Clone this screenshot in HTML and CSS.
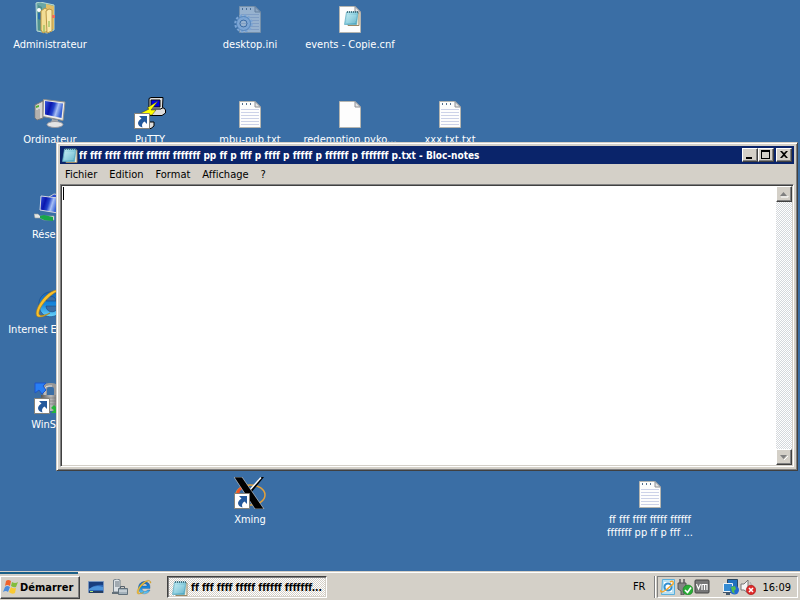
FILE: index.html
```html
<!DOCTYPE html>
<html lang="fr">
<head>
<meta charset="utf-8">
<title>Bureau</title>
<link rel="stylesheet" href="styles.css">
</head>
<body>
<svg class="defs" aria-hidden="true">
  <defs>
    <linearGradient id="screen" x1="0" y1="0" x2="1" y2=".3"><stop offset="0" stop-color="#3858dc"/><stop offset=".35" stop-color="#0a16ae"/><stop offset=".55" stop-color="#2344cc"/><stop offset=".75" stop-color="#a9c0f5"/><stop offset="1" stop-color="#3560d4"/></linearGradient>
    <linearGradient id="pad" x1="0" y1="0" x2="1" y2="1"><stop offset="0" stop-color="#c8eef4"/><stop offset=".5" stop-color="#86cbdc"/><stop offset="1" stop-color="#3d9db9"/></linearGradient>
    <linearGradient id="metal" x1="0" y1="0" x2="1" y2="0"><stop offset="0" stop-color="#555"/><stop offset=".5" stop-color="#bbb"/><stop offset="1" stop-color="#444"/></linearGradient>
    <linearGradient id="ieblue" x1="0" y1="0" x2="0" y2="1"><stop offset="0" stop-color="#1c63b4"/><stop offset=".5" stop-color="#1586dc"/><stop offset="1" stop-color="#6bd4fb"/></linearGradient>
  </defs>
  <symbol id="sheet" viewBox="0 0 32 32">
    <path d="M5.500 4.500H21L26.500 10V30.500H5.500Z" fill="#fdfdfd" stroke="#b5b5b0"/>
    <path d="M21 4.500V10H26.500Z" fill="#e4e4e4" stroke="#8e9096"/>
  </symbol>
  <symbol id="text" viewBox="0 0 32 32">
    <use href="#sheet"/>
    <path d="M7 12.500H25M7 15.500H25M7 18.500H25M7 21.500H25M7 24.500H25M7 27.500H25" stroke="#ccd2e8"/>
    <path d="M8 6h1v2H8zM12 6h1v2h-1zM16 6h1v2h-1z" fill="#536f8c"/>
  </symbol>
  <symbol id="notepad" viewBox="0 0 16 16">
    <path d="M4 3H15V15.500H4Z" fill="#f8f1df" stroke="#9b8865"/>
    <path d="M2.500 2H14L12.500 14.500H.5Z" fill="url(#pad)" stroke="#5ba9c0" stroke-width=".7"/>
    <path d="M3 6H12.500M2.700 8H12.300M2.500 10H12M2.200 12H11.500" stroke="#ddf6fa" stroke-width=".5"/>
    <path d="M3.500 1V3M5.500 1V3M7.500 1V3M9.500 1V3M11.500 1V3M13.500 1V3" stroke="#385f6c" stroke-width=".8"/>
  </symbol>
  <symbol id="shortcut" viewBox="0 0 16 16">
    <path d="M.5.500H15.500V15.500H.5Z" fill="#fff" stroke="#85827a"/>
    <path d="M5 3H13V11L10.500 8.500C8 10 7.500 12 8.500 14.500C3 13 2.500 8.500 7.500 5.500Z" fill="#24599c"/>
  </symbol>
  <symbol id="ie" viewBox="0 0 32 32">
    <path d="M28 19H12C12 25 20 27 23 22H28C25 31 10 33 6 23C2 12 10 4 18 5C25 6 29 11 28 19ZM12 14H22C22 8 13 8 12 14Z" fill="url(#ieblue)" stroke="#174781" stroke-width=".6"/>
    <path d="M30 8C30 0 18 1 9 12C1 22 0 31 6 30C9 30 13 28 16 26C9 29 4 30 5 25C6 20 12 12 19 7C24 3 29 2 28 8Z" fill="#f9c12c" stroke="#a87913" stroke-width=".6"/>
  </symbol>
  <symbol id="monitor" viewBox="0 0 32 32">
    <path d="M1 8L9 4V21L3 23L1 21Z" fill="#d7d5d2" stroke="#777"/>
    <path d="M2 9L5 8V10L2 11Z" fill="#56b431"/>
    <path d="M3 13V22M5 12V22" stroke="#918e8a"/>
    <path d="M18 22L24 23L23 27L17 26Z" fill="#a5a7aa"/>
    <ellipse cx="21" cy="27.500" rx="8" ry="3" fill="#e4e4e5" stroke="#9798a0"/>
    <path d="M9.500 2.500L31 5L29 23.500L9 19.500Z" fill="#eeede9" stroke="#92918d"/>
    <path d="M11 4L29 6.500L27.500 21L11 17.500Z" fill="url(#screen)"/>
  </symbol>
</svg>

<main class="desktop">
  <ul class="icons">
    <li class="item c1 r1"><svg viewBox="0 0 32 32"><path d="M2 1L6 0L20 3V28L13 31L3 29Z" fill="#6ba7a5" stroke="#b9dad2"/><path d="M4 3L8 5V29L4 28Z" fill="#4f918e"/><circle cx="5" cy="8" r="2" fill="#fff"/><path d="M4 11L7 11V18L4 17Z" fill="#286dae"/><path d="M12 2L20 4V27L12 29Z" fill="#e2bf67"/><path d="M7 9L11 6L14 8V29L9 31L7 28Z" fill="#f2dc93" stroke="#b99442"/><path d="M12 9L15 7L18 8V29L13 31Z" fill="#fae9ab" stroke="#bb9748"/><path d="M10 23V30M15 19V25" stroke="#7bb64d"/><path d="M18 13H21V16H18Z" fill="#ef705b"/></svg><span>Administrateur</span></li>
    <li class="item c3 r1"><svg viewBox="0 0 32 32"><g opacity=".48"><use href="#text"/></g><g fill="none" stroke="#7ba5d5"><circle cx="9.500" cy="21.500" r="8" stroke-width="2.500" stroke-dasharray="2.500 1.690"/><circle cx="9.500" cy="21.500" r="5.500" stroke-width="3"/><circle cx="9.500" cy="21.500" r="3.500" stroke="#386ba6"/><circle cx="9.500" cy="21.500" r="7" stroke="#4477b1" stroke-width=".7"/></g></svg><span>desktop.ini</span></li>
    <li class="item c4 r1"><svg viewBox="0 0 32 32"><use href="#sheet"/><use href="#notepad" x="10" y="8" width="16" height="16"/></svg><span>events - Copie.cnf</span></li>
    <li class="item c1 r2"><svg viewBox="0 0 32 32"><use href="#monitor"/></svg><span>Ordinateur</span></li>
    <li class="item c2 r2"><svg viewBox="0 0 32 32"><path d="M17 11H30L31.500 13V16L28 18.500H15V15Z" fill="#ddd" stroke="#000"/><path d="M15 1.500L17 .5H29L28.500 10.500L27 12H15Z" fill="#ddd" stroke="#000"/><path d="M17 3H26V10H17Z" fill="#0000e8" stroke="#111"/><path d="M14 25H20V29L17 31.500H13Z" fill="#ddd" stroke="#000"/><path d="M24 4L13 11L15 12L3 18H18L22 13L17 13Z" fill="#ffff00" stroke="#333" stroke-width=".5"/><use href="#shortcut" x="0" y="16" width="16" height="16"/></svg><span>PuTTY</span></li>
    <li class="item c3 r2"><svg viewBox="0 0 32 32"><use href="#text"/></svg><span>mbu-pub.txt</span></li>
    <li class="item c4 r2"><svg viewBox="0 0 32 32"><use href="#sheet"/></svg><span>redemption.pyko...</span></li>
    <li class="item c5 r2"><svg viewBox="0 0 32 32"><use href="#text"/></svg><span>xxx.txt.txt</span></li>
    <li class="item c1 r3"><svg viewBox="0 0 32 32"><path d="M15 5L20 2L31 4V20L17 19Z" fill="#2c4dd1" stroke="#ccc"/><path d="M7 4L24 6V21L6 18Z" fill="url(#screen)" stroke="#d4d7e0"/><path d="M0 22L4 22L6 24H20V28H10L6 26H1Z" fill="#e4e7e5" stroke="#9ca1a0" stroke-width=".6"/><path d="M6 24L10 23L19 25V29L10 28L6 26Z" fill="#18a648"/></svg><span>Réseau</span></li>
    <li class="item c1 r4"><svg viewBox="0 0 32 32"><use href="#ie"/></svg><span>Internet Explorer</span></li>
    <li class="item c1 r5"><svg viewBox="0 0 32 32"><path d="M11 14V7Q11 3 15 3H18Q22 3 22 7V14" fill="none" stroke="#999" stroke-width="4"/><path d="M11 13V7Q11 4 15 4H18" fill="none" stroke="#ddd"/><path d="M7 13H27V29H7Z" fill="url(#metal)"/><path d="M7 16H27M7 19H27M7 22H27" stroke="#777" stroke-width=".6"/><path d="M1 1H12L9 4L12 8L8 12L5 8L1 11Z" fill="#287ef5" stroke="#1f55c7"/><path d="M20 23L24 27V31H17L20 28L17 26Z" fill="#23b638"/><use href="#shortcut" x="0" y="16" width="16" height="16"/></svg><span>WinSCP</span></li>
    <li class="item c3 r6"><svg viewBox="0 0 32 32"><ellipse cx="16.500" cy="18" rx="14.500" ry="10" fill="none" stroke="#e4a13a" stroke-width="1.500"/><path d="M2 17Q3 10 12 8L8 12Q5 14 5 17Z" fill="#f35325"/><path d="M30 0L17 16L12 24L8 31H3L14 15L27 0Z" fill="#000"/><path d="M27 .5L15 14" fill="none" stroke="#fff" stroke-width="1.500"/><path d="M0 0H8L30 32H21Z" fill="#000" stroke="#ddd" stroke-width=".6"/><use href="#shortcut" x="0" y="16" width="16" height="16"/></svg><span>Xming</span></li>
    <li class="item c7 r6"><svg viewBox="0 0 32 32"><use href="#text"/></svg><span>ff fff ffff fffff ffffff<br>fffffff pp ff p fff ...</span></li>
  </ul>

  <section class="window" aria-label="Bloc-notes">
    <header class="titlebar">
      <svg class="small" viewBox="0 0 16 16"><use href="#notepad"/></svg>
      <h1>ff fff ffff fffff ffffff fffffff pp ff p fff p ffff p fffff p ffffff p fffffff p.txt - Bloc-notes</h1>
      <button class="caption" aria-label="Réduire"><svg viewBox="0 0 12 10"><path d="M2 7H8V9H2Z"/></svg></button>
      <button class="caption" aria-label="Agrandir"><svg viewBox="0 0 12 10"><path d="M1 0H10V9H1ZM2 2V8H9V2Z" fill-rule="evenodd"/></svg></button>
      <button class="caption close" aria-label="Fermer"><svg viewBox="0 0 12 10"><path d="M2 1H4L6 3L8 1H10L7 4.500L10 8H8L6 6L4 8H2L5 4.500Z"/></svg></button>
    </header>
    <nav class="menu"><button>Fichier</button><button>Edition</button><button>Format</button><button>Affichage</button><button>?</button></nav>
    <div class="editor">
      <textarea aria-label="Texte" spellcheck="false"></textarea>
      <div class="scrollbar">
        <button aria-label="Défiler vers le haut"><svg viewBox="0 0 12 12"><path d="M3 9H10V8" fill="none" stroke="#fff"/><path d="M2 8L5.500 4L9 8Z" fill="#808080"/></svg></button>
        <button aria-label="Défiler vers le bas"><svg viewBox="0 0 12 12"><path d="M6 9L10 5" fill="none" stroke="#fff"/><path d="M2 4H9L5.500 8Z" fill="#808080"/></svg></button>
      </div>
    </div>
  </section>
</main>

<footer class="taskbar">
  <button class="start"><svg class="small" viewBox="0 0 16 16"><path d="M3 2Q5 0 8 2L7 7Q4 5 2 7Z" fill="#ef622c"/><path d="M9 3Q12 5 15 3L13 8Q11 9 8 7Z" fill="#83bd3d"/><path d="M2 8Q4 6 7 8L5 13Q3 11 0 13Z" fill="#4a8cde"/><path d="M8 8Q10 10 13 9L12 14Q9 16 6 13Z" fill="#f9c932"/></svg>Démarrer</button>
  <div class="quick">
    <button aria-label="Bureau"><svg viewBox="0 0 16 16"><path d="M.5 2.500H15.500V13.500H.5Z" fill="#2b65b5" stroke="#7895bd"/><path d="M1 3H15V6Q8 5 1 10Z" fill="#193e7d"/><path d="M1 10Q7 5 15 8V11H1Z" fill="#4c93d9"/><path d="M1 12H15V14H1Z" fill="#263e61"/><path d="M2 12H5V13H2Z" fill="#b0e777"/></svg></button>
    <button aria-label="Gestionnaire de serveur"><svg viewBox="0 0 16 16"><path d="M1.500 1L5 0L8 1V13H1.500Z" fill="#dce1e5" stroke="#75818a"/><path d="M3 3H7M3 5H7M3 7H7" stroke="#66737d"/><path d="M0 14H8" stroke="#647079" stroke-width="2"/><path d="M8.500 9V7.500H12.500V9" fill="none" stroke="#56616a"/><path d="M6.500 9.500H15.500V15.500H6.500Z" fill="#a4b1ba" stroke="#61707b"/><path d="M7 12H15" stroke="#e4e9ec"/></svg></button>
    <button aria-label="Internet Explorer"><svg viewBox="0 0 32 32"><use href="#ie"/></svg></button>
  </div>
  <button class="task"><svg class="small" viewBox="0 0 16 16"><use href="#notepad"/></svg><span>ff fff ffff fffff ffffff fffffff...</span></button>
  <span class="lang">FR</span>
  <div class="tray">
    <svg viewBox="0 0 16 16"><path d="M2.500 .5H14.500V15.500H1.500Z" fill="#b9e1f3" stroke="#5aafdd"/><path d="M4 4H13M4 12H12" stroke="#fff" stroke-width="2"/><circle cx="8" cy="8" r="3.500" fill="#fff" stroke="#318fd0" stroke-width="2"/><path d="M1 11Q0 15 6 11L13 5Q14 1 10 3" fill="none" stroke="#f3a52a" stroke-width="1.500"/></svg>
    <svg viewBox="0 0 16 16"><path d="M3 0V4M7 0V4" stroke="#777" stroke-width="2"/><path d="M1 4H9V10L7 12V16H4V12L1 10Z" fill="#858585" stroke="#555"/><circle cx="11" cy="11" r="5" fill="#2bae37" stroke="#167720" stroke-width=".6"/><path d="M8 11L10.500 13.500L14 8.500" fill="none" stroke="#fff" stroke-width="1.700"/></svg>
    <svg class="vm" viewBox="0 0 16 16"><rect x="1" y="1" width="14" height="13" rx="1" fill="#777" stroke="#444"/><path d="M2.500 5L4.500 10L6.500 5M8 11V5.500H13V11M10.500 5V11" fill="none" stroke="#fff" stroke-width="1.200"/></svg>
    <svg viewBox="0 0 16 16"><path d="M4.500 .5H14.500V9.500H4.500Z" fill="#2170bd" stroke="#294761"/><path d="M.5 4.500H9.500V12.500H.5Z" fill="#348bd2" stroke="#eef4f8"/><path d="M0 13H10V14H0ZM3 14H7V16H3Z" fill="#42566a"/><circle cx="11.500" cy="11" r="4.500" fill="#2269d2"/><path d="M8 8L12 7L13 10L11 12L12 15L9 13Z" fill="#53bc4e"/></svg>
    <svg viewBox="0 0 16 16"><path d="M1 5H4L8 1V14L4 11H1Z" fill="#f5f5f5" stroke="#777"/><path d="M10 3Q12 5 11 8" fill="none" stroke="#aaa"/><circle cx="11" cy="11" r="4.700" fill="#df2929" stroke="#9d1111" stroke-width=".6"/><path d="M9 9L13 13M13 9L9 13" stroke="#fff" stroke-width="1.600"/></svg>
    <time>16:09</time>
  </div>
</footer>
</body>
</html>
```

FILE: styles.css
```css
* { box-sizing: border-box; }
html, body { height: 100%; margin: 0; }
body {
  display: flex;
  flex-direction: column;
  overflow: hidden;
  background: #3a6ea5;
  color: #000;
  font: 11px/13px "DejaVu Sans Condensed", "DejaVu Sans", sans-serif;
  font-variant-ligatures: none;
}
button { font: inherit; color: inherit; padding: 0; margin: 0; border: 0; background: none; }
svg { display: block; flex: none; }
.defs { position: absolute; width: 0; height: 0; }
.small { width: 16px; height: 16px; }

.desktop { position: relative; flex: 1; min-height: 0; }
.icons {
  display: grid;
  grid-template-columns: repeat(auto-fill, 100px);
  grid-auto-rows: 95px;
  margin: 0;
  padding: 2px 0 0;
  list-style: none;
}
.item {
  display: flex;
  flex-direction: column;
  align-items: center;
  gap: 4px;
  color: #fff;
  text-align: center;
  white-space: nowrap;
}
.item > svg { width: 32px; height: 32px; }
.c1 { grid-column: 1; } .c2 { grid-column: 2; } .c3 { grid-column: 3; }
.c4 { grid-column: 4; } .c5 { grid-column: 5; } .c7 { grid-column: 7; }
.r1 { grid-row: 1; } .r2 { grid-row: 2; } .r3 { grid-row: 3; }
.r4 { grid-row: 4; } .r5 { grid-row: 5; } .r6 { grid-row: 6; }

.window {
  position: absolute;
  inset: 142px 2px 101px 56px;
  display: flex;
  flex-direction: column;
  padding: 3px;
  background: #d4d0c8;
  border: 1px solid;
  border-color: #d4d0c8 #404040 #404040 #d4d0c8;
  box-shadow: inset 1px 1px #fff, inset -1px -1px #808080;
}
.titlebar {
  display: flex;
  align-items: center;
  height: 18px;
  padding: 0 2px;
  background: #0a246a;
  color: #fff;
}
.titlebar h1 { flex: 1; min-width: 0; margin: 0 0 0 1px; overflow: hidden; font-size: 10px; font-weight: bold; white-space: nowrap; }
.caption, .scrollbar button {
  display: grid;
  place-content: center;
  width: 16px;
  background: #d4d0c8;
  border: 1px solid;
  border-color: #fff #404040 #404040 #fff;
  box-shadow: inset -1px -1px #808080;
}
.caption { height: 14px; }
.caption svg { width: 12px; height: 10px; }
.close { margin-left: 2px; }
.menu { display: flex; gap: 12px; height: 20px; padding: 0 5px; }
.editor {
  position: relative;
  display: flex;
  flex: 1;
  min-height: 0;
  background: #fff;
  border: 1px solid;
  border-color: #808080 #fff #fff #808080;
  box-shadow: inset 1px 1px #404040, inset -1px -1px #d4d0c8;
  padding: 1px;
}
.editor::before { content: ""; position: absolute; top: 2px; left: 2px; width: 1px; height: 13px; background: #000; }
.editor textarea { flex: 1; min-width: 0; padding: 1px 2px; border: 0; outline: 0; resize: none; background: transparent; font: inherit; }
.scrollbar {
  display: flex;
  flex-direction: column;
  justify-content: space-between;
  width: 16px;
  background: repeating-conic-gradient(#d4d8dc 0 25%, #fff 0 50%) 0 0 / 2px 2px;
}
.scrollbar button { height: 16px; }
.scrollbar svg { width: 12px; height: 12px; }

.taskbar {
  display: flex;
  align-items: center;
  height: 28px;
  padding: 2px 2px 0 0;
  background: #d4d0c8;
  box-shadow: inset 0 1px #fff, 0 -1px #d4d0c8;
}
.start {
  position: relative;
  display: flex;
  align-items: center;
  gap: 1px;
  width: 80px;
  height: 23px;
  padding: 0 2px;
  background: #d4d0c8;
  border: 1px solid;
  border-color: #fff #404040 #404040 #fff;
  box-shadow: inset -1px -1px #808080;
  font-weight: bold;
}
.start::before { content: ""; position: absolute; left: -1px; top: -5px; width: 78px; height: 2px; background: #1b6088; }
.quick { display: flex; gap: 8px; margin-left: 8px; }
.quick svg { width: 16px; height: 16px; }
.task {
  display: flex;
  align-items: center;
  gap: 3px;
  width: 160px;
  height: 22px;
  margin-left: 15px;
  padding: 1px 4px 0;
  background: repeating-conic-gradient(#d4d0c8 0 25%, #fff 0 50%) 0 0 / 2px 2px;
  border: 1px solid;
  border-color: #404040 #fff #fff #404040;
  box-shadow: inset 1px 1px #808080, inset -1px -1px #d4d0c8;
  font-size: 10px;
  font-weight: bold;
  white-space: nowrap;
}
.lang { margin-left: auto; padding-right: 9px; border-right: 1px solid #808080; line-height: 22px; box-shadow: 1px 0 #fff; }
.tray {
  display: flex;
  align-items: center;
  gap: 1px;
  height: 22px;
  margin-left: 2px;
  padding: 0 6px 0 2px;
  border: 1px solid;
  border-color: #808080 #fff #fff #808080;
}
.tray svg { width: 16px; height: 16px; }
.tray .vm { margin-right: 12px; }
.tray time { margin-left: 5px; }
```
